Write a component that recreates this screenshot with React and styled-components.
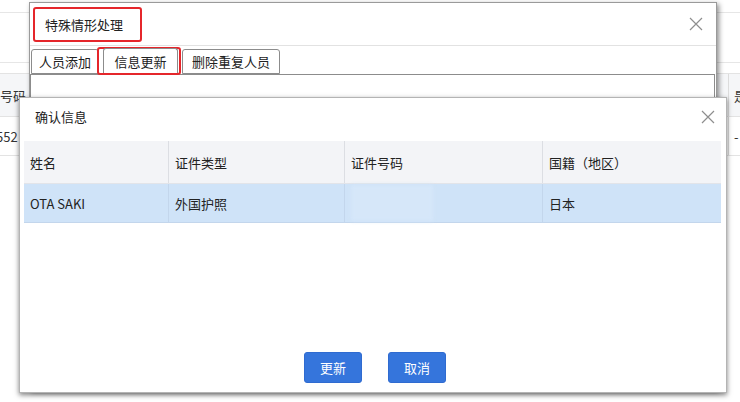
import React from 'react'
import styled, { createGlobalStyle } from 'styled-components'

const GlobalStyle = createGlobalStyle`
  html, body {
    margin: 0;
    padding: 0;
    background: #ffffff;
    font-family: "Microsoft YaHei", "Noto Sans CJK SC", "Noto Sans", sans-serif;
  }
`

const Page = styled.div`
  position: relative;
  width: 740px;
  height: 402px;
  overflow: hidden;
  background: #ffffff;
  color: #333;
`

/* page behind the dialogs */
const BackTop = styled.div`
  height: 12px;
  border-bottom: 1px solid #e6e6e6;
`

const BackBand = styled.div`
  height: 49px;
  border-bottom: 1px solid #e6e6e6;
`

const BackTable = styled.div`
  margin-top: 10px;
`

const BackRow = styled.div`
  display: flex;
  justify-content: space-between;
  height: ${p => p.h}px;
  border-top: 1px solid #e3e3e3;
  background: ${p => (p.head ? '#f5f6f8' : '#fff')};
`

const BackCell = styled.div`
  display: flex;
  align-items: center;
  font-size: 13px;
  color: #333;
  white-space: nowrap;
  overflow: hidden;
  width: ${p => p.w}px;
  border-left: ${p => (p.line ? '1px solid #dcdcdc' : 'none')};
  padding-left: ${p => (p.line ? 5 : 0)}px;
  box-sizing: border-box;
`

const Clipped = styled.span`
  margin-left: ${p => p.shift}px;
`

/* outer dialog */
const OuterDialog = styled.div`
  position: absolute;
  left: 29px;
  top: 2px;
  width: 688px;
  height: 388px;
  background: #fff;
  border: 1px solid #9a9a9a;
  box-shadow: 2px 2px 5px rgba(0, 0, 0, 0.45);
  box-sizing: border-box;
`

const OuterHeader = styled.div`
  display: flex;
  align-items: center;
  justify-content: space-between;
  height: 42px;
  border-bottom: 1px solid #e2e2e2;
  padding: 0 12px 0 3px;
`

const Marked = styled.div`
  display: flex;
  align-items: center;
  width: 109px;
  height: 35px;
  border: 2px solid #e5262b;
  border-radius: 3px;
  box-sizing: border-box;
  padding: 0 10px;
`

const Title = styled.span`
  font-size: 13px;
  color: #222;
`

const Close = styled.button`
  display: flex;
  align-items: center;
  justify-content: center;
  width: 16px;
  height: 16px;
  padding: 0;
  border: none;
  background: none;
  cursor: pointer;
`

const TabBar = styled.div`
  display: flex;
  align-items: flex-end;
  height: 28px;
  padding-left: 1px;
`

const Tab = styled.div`
  display: flex;
  align-items: center;
  justify-content: center;
  width: ${p => p.w}px;
  height: 25px;
  box-sizing: border-box;
  border: 1px solid #8c8c8c;
  border-bottom: ${p => (p.active ? 'none' : '1px solid #8c8c8c')};
  border-radius: 3px 3px 0 0;
  font-size: 13px;
  color: #222;
  background: #fff;
`

const ActiveWrap = styled.div`
  position: relative;
  z-index: 1;
  display: flex;
  align-items: flex-end;
  height: 28px;
  margin: 0 1px -1px -2px;
  padding: 0 1px 0 4px;
  border: 2px solid #e5262b;
  border-radius: 3px;
  box-sizing: border-box;
`

const TabPanel = styled.div`
  width: 685px;
  height: 40px;
  border: 1px solid #8c8c8c;
  border-bottom: none;
  box-sizing: border-box;
`

/* inner dialog */
const InnerDialog = styled.div`
  position: absolute;
  left: 19px;
  top: 97px;
  width: 708px;
  height: 296px;
  background: #fff;
  border: 1px solid #b4b4b4;
  box-shadow: 0 2px 5px rgba(0, 0, 0, 0.5);
  box-sizing: border-box;
  display: flex;
  flex-direction: column;
`

const InnerHeader = styled.div`
  display: flex;
  align-items: center;
  justify-content: space-between;
  height: 43px;
  padding: 0 10px 6px 15px;
  box-sizing: border-box;
`

const Table = styled.div`
  margin-left: 4px;
  width: 697px;
`

const Row = styled.div`
  display: grid;
  grid-template-columns: 145px 176px 198px 178px;
  height: ${p => (p.head ? 42 : 38)}px;
  background: ${p => (p.head ? '#f3f4f7' : '#cfe3f8')};
  border-bottom: 1px solid ${p => (p.head ? '#e2e4e9' : '#c3d6ec')};
`

const Cell = styled.div`
  display: flex;
  align-items: center;
  padding-left: 6px;
  font-size: 13px;
  color: #222;
  border-right: 1px solid ${p => (p.head ? '#dcdee3' : '#c3d6ec')};
  &:last-child {
    border-right: none;
  }
`

const Blur = styled.div`
  width: 82px;
  height: 36px;
  background: #d6e7f9;
  filter: blur(2px);
`

const Footer = styled.div`
  display: flex;
  justify-content: center;
  gap: 26px;
  margin-top: auto;
  padding: 0 0 9px 4px;
`

const Button = styled.button`
  width: 58px;
  height: 31px;
  border: 1px solid #2f6bd0;
  border-radius: 3px;
  background: #3575dc;
  color: #fff;
  font-family: inherit;
  font-size: 13px;
  cursor: pointer;
`

const CloseIcon = () => (
  <svg width="14" height="14" viewBox="0 0 14 14">
    <path d="M1 1 L13 13 M13 1 L1 13" stroke="#8e8e8e" strokeWidth="1.2" fill="none" />
  </svg>
)

const App = () => {
  return (
    <Page>
      <GlobalStyle />
      <BackTop />
      <BackBand />
      <BackTable>
        <BackRow head h={42}>
          <BackCell w={26}>号码</BackCell>
          <BackCell w={12} line>是</BackCell>
        </BackRow>
        <BackRow h={38}>
          <BackCell w={26}><Clipped shift={-4}>552</Clipped></BackCell>
          <BackCell w={12} line>-</BackCell>
        </BackRow>
        <BackRow h={1} />
      </BackTable>

      <OuterDialog>
        <OuterHeader>
          <Marked>
            <Title>特殊情形处理</Title>
          </Marked>
          <Close><CloseIcon /></Close>
        </OuterHeader>
        <TabBar>
          <Tab w={68}>人员添加</Tab>
          <ActiveWrap>
            <Tab w={75} active>信息更新</Tab>
          </ActiveWrap>
          <Tab w={98}>删除重复人员</Tab>
        </TabBar>
        <TabPanel />
      </OuterDialog>

      <InnerDialog>
        <InnerHeader>
          <Title>确认信息</Title>
          <Close><CloseIcon /></Close>
        </InnerHeader>
        <Table>
          <Row head>
            <Cell head>姓名</Cell>
            <Cell head>证件类型</Cell>
            <Cell head>证件号码</Cell>
            <Cell head>国籍（地区）</Cell>
          </Row>
          <Row>
            <Cell>OTA SAKI</Cell>
            <Cell>外国护照</Cell>
            <Cell><Blur /></Cell>
            <Cell>日本</Cell>
          </Row>
        </Table>
        <Footer>
          <Button>更新</Button>
          <Button>取消</Button>
        </Footer>
      </InnerDialog>
    </Page>
  )
}

export default App
